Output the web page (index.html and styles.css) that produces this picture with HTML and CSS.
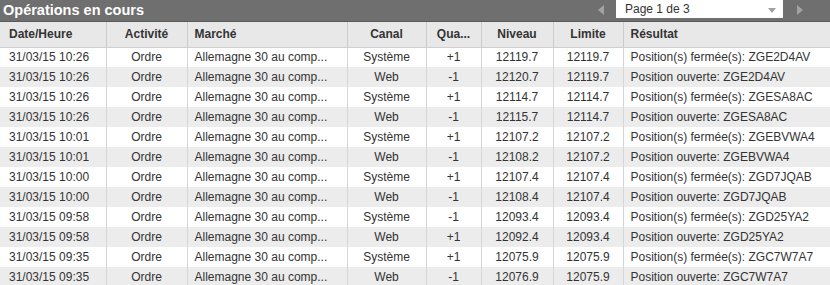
FILE: index.html
```html
<!DOCTYPE html>
<html lang="fr">
<head>
<meta charset="utf-8">
<link rel="stylesheet" href="styles.css">
</head>
<body>
<div class="panel">
  <div class="titlebar">
    <div class="title">Opérations en cours</div>
    <div class="pager">
      <span class="arrow arrow-left"></span>
      <div class="select"><span class="select-text">Page 1 de 3</span><span class="caret"></span></div>
      <span class="arrow arrow-right"></span>
    </div>
  </div>
  <table class="grid">
    <colgroup>
      <col class="c-date"><col class="c-act"><col class="c-mkt"><col class="c-can"><col class="c-qty"><col class="c-niv"><col class="c-lim"><col class="c-res">
    </colgroup>
    <thead>
      <tr><th class="l first">Date/Heure</th><th>Activité</th><th class="l">Marché</th><th>Canal</th><th>Qua...</th><th>Niveau</th><th>Limite</th><th class="l">Résultat</th></tr>
    </thead>
    <tbody>
      <tr><td class="l first">31/03/15 10:26</td><td>Ordre</td><td class="l">Allemagne 30 au comp...</td><td>Système</td><td>+1</td><td>12119.7</td><td>12119.7</td><td class="l">Position(s) fermée(s): ZGE2D4AV</td></tr>
      <tr><td class="l first">31/03/15 10:26</td><td>Ordre</td><td class="l">Allemagne 30 au comp...</td><td>Web</td><td>-1</td><td>12120.7</td><td>12119.7</td><td class="l">Position ouverte: ZGE2D4AV</td></tr>
      <tr><td class="l first">31/03/15 10:26</td><td>Ordre</td><td class="l">Allemagne 30 au comp...</td><td>Système</td><td>+1</td><td>12114.7</td><td>12114.7</td><td class="l">Position(s) fermée(s): ZGESA8AC</td></tr>
      <tr><td class="l first">31/03/15 10:26</td><td>Ordre</td><td class="l">Allemagne 30 au comp...</td><td>Web</td><td>-1</td><td>12115.7</td><td>12114.7</td><td class="l">Position ouverte: ZGESA8AC</td></tr>
      <tr><td class="l first">31/03/15 10:01</td><td>Ordre</td><td class="l">Allemagne 30 au comp...</td><td>Système</td><td>+1</td><td>12107.2</td><td>12107.2</td><td class="l">Position(s) fermée(s): ZGEBVWA4</td></tr>
      <tr><td class="l first">31/03/15 10:01</td><td>Ordre</td><td class="l">Allemagne 30 au comp...</td><td>Web</td><td>-1</td><td>12108.2</td><td>12107.2</td><td class="l">Position ouverte: ZGEBVWA4</td></tr>
      <tr><td class="l first">31/03/15 10:00</td><td>Ordre</td><td class="l">Allemagne 30 au comp...</td><td>Système</td><td>+1</td><td>12107.4</td><td>12107.4</td><td class="l">Position(s) fermée(s): ZGD7JQAB</td></tr>
      <tr><td class="l first">31/03/15 10:00</td><td>Ordre</td><td class="l">Allemagne 30 au comp...</td><td>Web</td><td>-1</td><td>12108.4</td><td>12107.4</td><td class="l">Position ouverte: ZGD7JQAB</td></tr>
      <tr><td class="l first">31/03/15 09:58</td><td>Ordre</td><td class="l">Allemagne 30 au comp...</td><td>Système</td><td>-1</td><td>12093.4</td><td>12093.4</td><td class="l">Position(s) fermée(s): ZGD25YA2</td></tr>
      <tr><td class="l first">31/03/15 09:58</td><td>Ordre</td><td class="l">Allemagne 30 au comp...</td><td>Web</td><td>+1</td><td>12092.4</td><td>12093.4</td><td class="l">Position ouverte: ZGD25YA2</td></tr>
      <tr><td class="l first">31/03/15 09:35</td><td>Ordre</td><td class="l">Allemagne 30 au comp...</td><td>Système</td><td>+1</td><td>12075.9</td><td>12075.9</td><td class="l">Position(s) fermée(s): ZGC7W7A7</td></tr>
      <tr><td class="l first">31/03/15 09:35</td><td>Ordre</td><td class="l">Allemagne 30 au comp...</td><td>Web</td><td>-1</td><td>12076.9</td><td>12075.9</td><td class="l">Position ouverte: ZGC7W7A7</td></tr>
    </tbody>
  </table>
</div>
</body>
</html>
```

FILE: styles.css
```css
html, body {
  margin: 0;
  padding: 0;
  background: #ffffff;
}
body {
  font-family: "Liberation Sans", Arial, sans-serif;
  color: #333333;
  width: 830px;
  height: 285px;
  overflow: hidden;
}
.panel {
  width: 830px;
}
.titlebar {
  height: 21px;
  background: #6f6f6f;
  border-bottom: 1px solid #5a5a5a;
  display: flex;
  align-items: flex-start;
  justify-content: space-between;
}
.title {
  color: #ffffff;
  font-weight: bold;
  font-size: 14.5px;
  line-height: 20px;
  padding-left: 3px;
}
.pager {
  display: flex;
  align-items: flex-start;
  padding-right: 27px;
}
.arrow {
  width: 0;
  height: 0;
  margin-top: 5px;
  border-top: 5px solid transparent;
  border-bottom: 5px solid transparent;
}
.arrow-left {
  border-right: 6px solid #a3a3a3;
  margin-right: 12px;
}
.arrow-right {
  border-left: 6px solid #a3a3a3;
  margin-left: 14px;
}
.select {
  width: 167px;
  height: 18px;
  background: #ffffff;
  display: flex;
  align-items: center;
  justify-content: space-between;
  box-sizing: border-box;
  padding: 0 7px 0 9px;
}
.select-text {
  font-size: 12px;
  color: #333333;
  line-height: 18px;
}
.caret {
  width: 0;
  height: 0;
  border-left: 4px solid transparent;
  border-right: 4px solid transparent;
  border-top: 5px solid #a0a0a0;
  margin-top: 2px;
}
.grid {
  width: 830px;
  border-collapse: collapse;
  table-layout: fixed;
  font-size: 12px;
}
.c-date { width: 106px; }
.c-act { width: 81px; }
.c-mkt { width: 160px; }
.c-can { width: 79px; }
.c-qty { width: 55px; }
.c-niv { width: 72px; }
.c-lim { width: 70px; }
.c-res { width: 207px; }
.grid th, .grid td {
  text-align: center;
  border-left: 1px solid #d6d6d6;
  white-space: nowrap;
  overflow: hidden;
  padding: 0 7px;
  box-sizing: border-box;
}
.grid th.first, .grid td.first {
  border-left: none;
  padding-left: 9px;
}
.grid th.l, .grid td.l {
  text-align: left;
}
.grid th {
  height: 25px;
  background: #e8e8e8;
  font-weight: bold;
  color: #333333;
  border-bottom: 1px solid #cfcfcf;
  border-left-color: #cccccc;
}
.grid td {
  height: 20px;
  color: #333333;
}
.grid tbody tr:nth-child(even) td {
  background: #ececec;
}
```
